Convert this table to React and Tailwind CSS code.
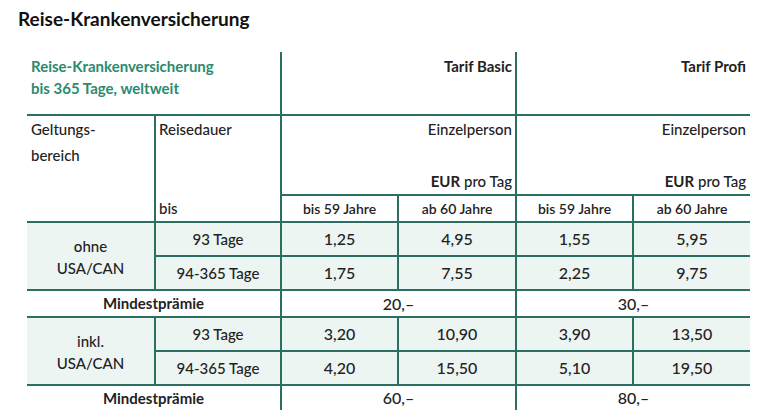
import React from 'react'

const line = 'border-[#2a6f61]'
const shade = 'bg-[#edf5f2]'

const groups = [
  {
    label: ['ohne', 'USA/CAN'],
    rows: [
      { dauer: '93 Tage', values: ['1,25', '4,95', '1,55', '5,95'] },
      { dauer: '94-365 Tage', values: ['1,75', '7,55', '2,25', '9,75'] },
    ],
    min: ['20,–', '30,–'],
  },
  {
    label: ['inkl.', 'USA/CAN'],
    rows: [
      { dauer: '93 Tage', values: ['3,20', '10,90', '3,90', '13,50'] },
      { dauer: '94-365 Tage', values: ['4,20', '15,50', '5,10', '19,50'] },
    ],
    min: ['60,–', '80,–'],
  },
]

function Group({ group }) {
  return (
    <>
      <div className={`row-span-2 border-t-2 ${line} ${shade} flex flex-col items-center justify-center leading-[22px] text-[15px] pt-[2px]`}>
        <span>{group.label[0]}</span>
        <span>{group.label[1]}</span>
      </div>
      {group.rows.map((r, i) => (
        <React.Fragment key={i}>
          <div className={`border-t-2 border-l-2 ${line} ${shade} flex items-center justify-center text-[15px]`}>
            {r.dauer}
          </div>
          {r.values.map((v, j) => (
            <div key={j} className={`border-t-2 border-l-2 ${line} ${shade} flex items-center justify-center text-[16px]`}>
              {v}
            </div>
          ))}
        </React.Fragment>
      ))}
      <div className={`col-span-2 border-t-2 ${line} flex items-center justify-center font-bold text-[15px]`}>
        Mindestprämie
      </div>
      <div className={`col-span-2 border-t-2 border-l-2 ${line} flex items-center justify-center text-[16px]`}>
        {group.min[0]}
      </div>
      <div className={`col-span-2 border-t-2 border-l-2 ${line} flex items-center justify-center text-[16px]`}>
        {group.min[1]}
      </div>
    </>
  )
}

export default function App() {
  return (
    <div className="w-[768px] h-[420px] bg-white text-[#222] font-['Lato',sans-serif] font-medium overflow-hidden">
      <h1 className="pl-[18px] pt-[7px] h-[52px] text-[19px] font-bold leading-[24px] text-[#111]">
        Reise-Krankenversicherung
      </h1>

      <div className="ml-[27px] grid grid-cols-[127px_126px_117px_118px_117px_118px] grid-rows-[62px_80px_27px_34px_34px_27px_34px_34px_26px]">
        {/* Kopf */}
        <div className="col-span-2 pl-[4px] pt-[3px] text-[15px] font-bold leading-[22px] text-[#2b8a6f]">
          <div>Reise-Krankenversicherung</div>
          <div>bis 365 Tage, weltweit</div>
        </div>
        <div className={`col-span-2 border-l-2 ${line} pt-[3px] pr-[3px] text-right text-[15px] font-bold leading-[22px]`}>
          Tarif Basic
        </div>
        <div className={`col-span-2 border-l-2 ${line} pt-[3px] pr-[4px] text-right text-[15px] font-bold leading-[22px]`}>
          Tarif Profi
        </div>

        <div className={`row-span-2 border-t-2 ${line} pl-[4px] text-[15px] leading-[26px]`}>
          <div>Geltungs-</div>
          <div>bereich</div>
        </div>
        <div className={`row-span-2 border-t-2 border-l-2 ${line} pl-[3px] flex flex-col justify-between text-[15px] leading-[26px]`}>
          <span>Reisedauer</span>
          <span>bis</span>
        </div>
        {['pr-[3px]', 'pr-[4px]'].map((pr, i) => (
          <div key={i} className={`col-span-2 border-t-2 border-l-2 ${line} ${pr} flex flex-col justify-between items-end text-[15px] leading-[26px]`}>
            <span>Einzelperson</span>
            <span><span className="font-bold">EUR</span> pro Tag</span>
          </div>
        ))}

        {['bis 59 Jahre', 'ab 60 Jahre', 'bis 59 Jahre', 'ab 60 Jahre'].map((t, i) => (
          <div key={i} className={`border-t-2 border-l-2 ${line} flex items-center justify-center text-[14px] font-semibold`}>
            {t}
          </div>
        ))}

        {groups.map((g, i) => (
          <Group key={i} group={g} />
        ))}
      </div>
    </div>
  )
}
